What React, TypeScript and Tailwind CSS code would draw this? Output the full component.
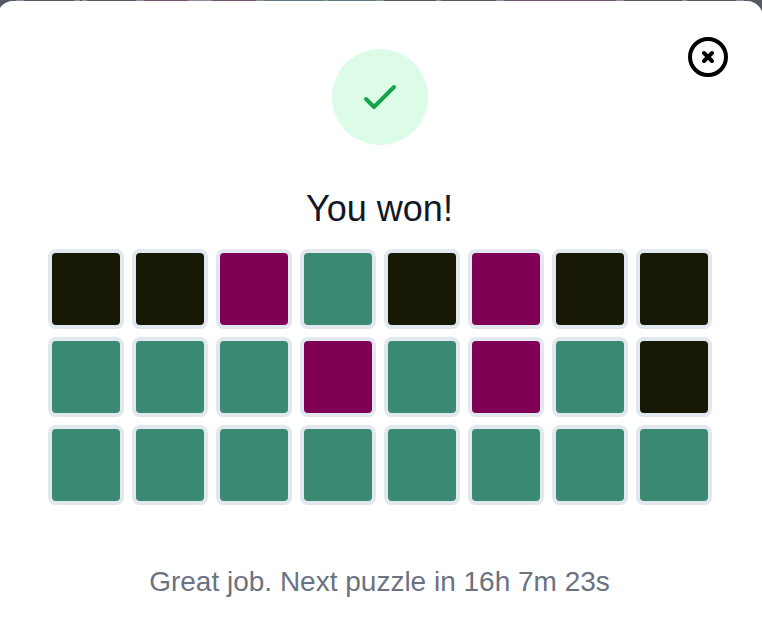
import clsx from "clsx";

type Result = "miss" | "close" | "hit";

const guesses: Result[][] = [
  ["miss", "miss", "close", "hit", "miss", "close", "miss", "miss"],
  ["hit", "hit", "hit", "close", "hit", "close", "hit", "miss"],
  ["hit", "hit", "hit", "hit", "hit", "hit", "hit", "hit"],
];

const resultClass: Record<Result, string> = {
  miss: "bg-[#161803]",
  close: "bg-[#800055]",
  hit: "bg-[#3a8a73]",
};

// Dimmed keyboard row that peeks out above the dialog
const backdropKeys = [
  { width: "w-[16px]", color: "bg-[#555961]" },
  { width: "w-[8px]", color: "bg-[#8b8f9c]" },
  { width: "w-[50px]", color: "bg-[#555961]" },
  { width: "w-[6px]", color: "bg-[#8b8f9c]" },
  { width: "w-[2px]", color: "bg-[#555961]" },
  { width: "w-[5px]", color: "bg-[#8b8f9c]" },
  { width: "w-[49px]", color: "bg-[#555961]" },
  { width: "w-[8px]", color: "bg-[#8b8f9c]" },
  { width: "w-[44px]", color: "bg-[#774f75]" },
  { width: "w-[24px]", color: "bg-[#8b8f9c]" },
  { width: "w-[44px]", color: "bg-[#774f75]" },
  { width: "w-[8px]", color: "bg-[#8b8f9c]" },
  { width: "w-[59px]", color: "bg-[#5c777d]" },
  { width: "w-[5px]", color: "bg-[#8b8f9c]" },
  { width: "w-[48px]", color: "bg-[#5c777d]" },
  { width: "w-[8px]", color: "bg-[#8b8f9c]" },
  { width: "w-[52px]", color: "bg-[#555961]" },
  { width: "w-[5px]", color: "bg-[#8b8f9c]" },
  { width: "w-[55px]", color: "bg-[#555961]" },
  { width: "w-[8px]", color: "bg-[#8b8f9c]" },
  { width: "w-[112px]", color: "bg-[#774f75]" },
  { width: "w-[8px]", color: "bg-[#8b8f9c]" },
  { width: "w-[58px]", color: "bg-[#555961]" },
  { width: "w-[5px]", color: "bg-[#8b8f9c]" },
  { width: "w-[49px]", color: "bg-[#555961]" },
  { width: "w-[8px]", color: "bg-[#8b8f9c]" },
  { width: "w-[18px]", color: "bg-[#555961]" },
];

function CloseIcon() {
  return (
    <svg className="size-12" fill="none" viewBox="0 0 24 24" stroke="currentColor" strokeWidth={2}>
      <path
        strokeLinecap="round"
        strokeLinejoin="round"
        d="M10 14l2-2m0 0l2-2m-2 2l-2-2m2 2l2 2m7-2a9 9 0 11-18 0 9 9 0 0118 0z"
      />
    </svg>
  );
}

function CheckIcon() {
  return (
    <svg className="size-12" fill="none" viewBox="0 0 24 24" stroke="currentColor" strokeWidth={2}>
      <path strokeLinecap="round" strokeLinejoin="round" d="M5 13l4 4L19 7" />
    </svg>
  );
}

export default function App() {
  return (
    <div className="flex h-[628px] w-[762px] flex-col overflow-hidden bg-[#555961] font-['Liberation_Sans',Arial,sans-serif]">
      {/* Backdrop */}
      <div className="flex h-px shrink-0">
        {backdropKeys.map((key, i) => (
          <div key={i} className={clsx("shrink-0", key.width, key.color)} />
        ))}
      </div>

      {/* Dialog */}
      <div role="dialog" className="relative -mr-px -ml-[3px] flex-1 rounded-t-2xl bg-white px-[51px] pt-12">
        <button aria-label="Close" className="absolute top-8 right-[31px] text-black">
          <CloseIcon />
        </button>

        <div className="mx-auto flex size-24 items-center justify-center rounded-full bg-[#dcfce7] text-[#16a34a]">
          <CheckIcon />
        </div>

        <h3 className="mt-10 pr-px text-center text-4xl leading-12 text-[#111827]">You won!</h3>

        {/* Guess grid */}
        <div className="mt-4 flex flex-col gap-2">
          {guesses.map((row, i) => (
            <div key={i} className="flex gap-2">
              {row.map((result, j) => (
                <div
                  key={j}
                  className={clsx("h-20 w-[76px] rounded-lg border-4 border-[#e2e8f0]", resultClass[result])}
                />
              ))}
            </div>
          ))}
        </div>

        <p className="mt-[57px] pr-px text-center text-[28px] leading-10 text-[#6b7280]">
          Great job. Next puzzle in 16h 7m 23s
        </p>
      </div>
    </div>
  );
}
